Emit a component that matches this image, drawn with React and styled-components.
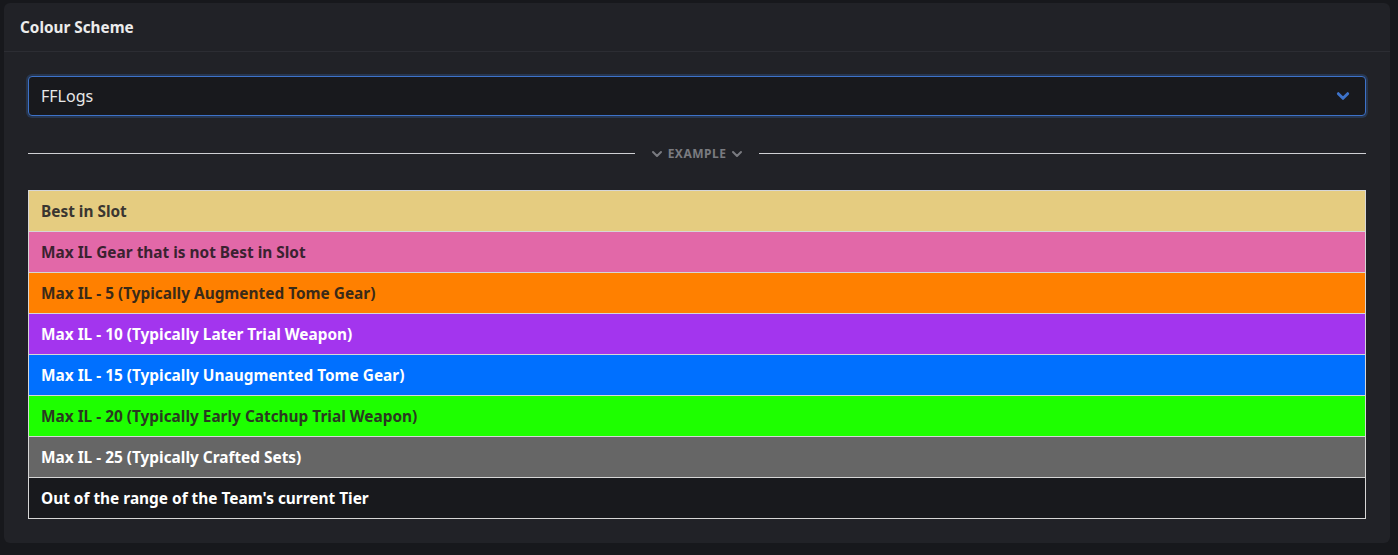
import React from "react";
import styled, { createGlobalStyle } from "styled-components";

const GlobalStyle = createGlobalStyle`
  html, body {
    margin: 0;
    padding: 0;
    background: #17181c;
    font-family: "Noto Sans", "Open Sans", sans-serif;
  }
`;

const Page = styled.div`
  padding: 3px 8px 12px 4px;
`;

const Card = styled.div`
  background: #212227;
  border-radius: 6px;
  overflow: hidden;
`;

const CardHeader = styled.div`
  height: 49px;
  display: flex;
  align-items: center;
  padding: 0 16px;
  border-bottom: 1px solid #2c2d33;
  box-sizing: border-box;
  color: #ececec;
  font-weight: 700;
  font-size: 15.3px;
`;

const CardBody = styled.div`
  padding: 24px 24px 24px;
`;

const SelectBox = styled.div`
  position: relative;
  height: 40px;
  box-sizing: border-box;
  border: 1px solid #3d72c9;
  border-radius: 4px;
  box-shadow: 0 0 0 2px rgba(61, 114, 201, 0.25);
  background: #18191d;
  display: flex;
  align-items: center;
  padding: 0 12px;
  color: #e8e8e8;
  font-size: 16px;
`;

const Arrow = styled.svg`
  margin-left: auto;
  margin-right: 3px;
`;

const Divider = styled.div`
  display: flex;
  align-items: center;
  gap: 16px;
  margin: 29px 0 28px;
  color: #7a7b80;
  font-size: 12px;
  font-weight: 700;
  letter-spacing: 0.5px;
  &::before,
  &::after {
    content: "";
    flex: 1;
    height: 1px;
    background: #cfd0d4;
  }
`;

const DividerLabel = styled.span`
  display: flex;
  align-items: center;
  gap: 5px;
`;

const Table = styled.div`
  border: 1px solid #d6d6d6;
`;

const Row = styled.div`
  height: 40px;
  display: flex;
  align-items: center;
  padding: 0 12px;
  background: ${(p) => p.bg};
  color: ${(p) => p.fg};
  font-size: 15.4px;
  font-weight: 700;
  & + & {
    border-top: 1px solid #d6d6d6;
  }
`;

const Chevron = ({ size = 12, color = "currentColor", width = 2.5 }) => (
  <svg width={size} height={size} viewBox="0 0 12 12" fill="none">
    <path d="M2 4l4 4 4-4" stroke={color} strokeWidth={width} strokeLinecap="round" strokeLinejoin="round" />
  </svg>
);

const rows = [
  { label: "Best in Slot", bg: "#e5cc80", fg: "#3a3630" },
  { label: "Max IL Gear that is not Best in Slot", bg: "#e268a8", fg: "#3a2230" },
  { label: "Max IL - 5 (Typically Augmented Tome Gear)", bg: "#ff8000", fg: "#3a2a18" },
  { label: "Max IL - 10 (Typically Later Trial Weapon)", bg: "#a335ee", fg: "#ffffff" },
  { label: "Max IL - 15 (Typically Unaugmented Tome Gear)", bg: "#0070ff", fg: "#ffffff" },
  { label: "Max IL - 20 (Typically Early Catchup Trial Weapon)", bg: "#1eff00", fg: "#2a3a20" },
  { label: "Max IL - 25 (Typically Crafted Sets)", bg: "#666666", fg: "#ffffff" },
  { label: "Out of the range of the Team's current Tier", bg: "#18191d", fg: "#ffffff" },
];

export default function App() {
  return (
    <Page>
      <GlobalStyle />
      <Card>
        <CardHeader>Colour Scheme</CardHeader>
        <CardBody>
          <SelectBox>
            FFLogs
            <Arrow width="14" height="14" viewBox="0 0 12 12" fill="none">
              <path d="M2 4l4 4 4-4" stroke="#3d72c9" strokeWidth="2.5" strokeLinecap="round" strokeLinejoin="round" />
            </Arrow>
          </SelectBox>
          <Divider>
            <DividerLabel>
              <Chevron size={12} width={2} />
              EXAMPLE
              <Chevron size={12} width={2} />
            </DividerLabel>
          </Divider>
          <Table>
            {rows.map((r) => (
              <Row key={r.label} bg={r.bg} fg={r.fg}>
                {r.label}
              </Row>
            ))}
          </Table>
        </CardBody>
      </Card>
    </Page>
  );
}
